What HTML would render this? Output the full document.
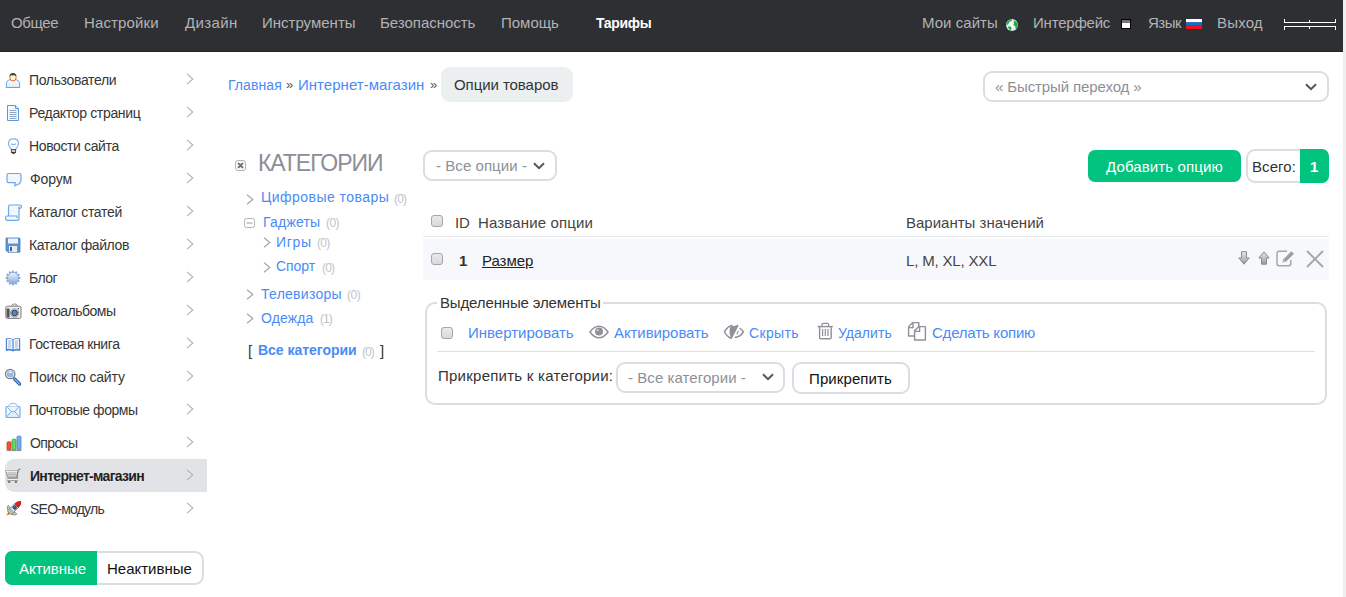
<!DOCTYPE html>
<html><head><meta charset="utf-8">
<style>
html,body{margin:0;padding:0;width:1346px;height:597px;overflow:hidden;background:#fff;font-family:"Liberation Sans",sans-serif;}
.a{position:absolute;white-space:nowrap;line-height:20px;}
.b{position:absolute;box-sizing:border-box;}
svg{position:absolute;overflow:visible;}
#hdr{left:0;top:0;width:1343px;height:52px;background:#2e2f33;border-bottom:1px solid #232428;}
#vbar{left:1343px;top:0;width:3px;height:597px;background:#efefef;}
.cbx{position:absolute;box-sizing:border-box;width:12px;height:12px;border:1px solid #a6a6a6;border-radius:3px;background:linear-gradient(#e9e9e9,#d9d9d9);}
.sel{border:2px solid #dcdde3;border-radius:9px;background:#fff;}
</style></head><body>
<div id="hdr" class="b"></div>
<div id="vbar" class="b"></div>

<!-- header icons -->
<svg style="left:1006px;top:19px" width="12" height="12" viewBox="0 0 12 12">
 <defs><radialGradient id="gl" cx="0.45" cy="0.5" r="0.6"><stop offset="0" stop-color="#ffffff"/><stop offset="0.7" stop-color="#e3ebfb"/><stop offset="1" stop-color="#b9c4de"/></radialGradient></defs>
 <circle cx="6" cy="6" r="6" fill="url(#gl)"/>
 <path d="M0.3 6.8 Q0.2 2.4 4 0.4 L6 0.6 L5.8 1.8 L3.8 2.6 L2.4 4.8 Z" fill="#16b03a"/>
 <path d="M1.8 7.6 L4.6 7.4 L5.6 9.6 L4.4 11.6 Q2.4 10.4 1.8 7.6 Z" fill="#16b03a"/>
 <path d="M7.6 1.6 Q11 2.6 11.8 6 L11 9.6 L9.6 9.4 L9.2 7 L7.4 6.2 L8 4 Z" fill="#16b03a"/>
</svg>
<div class="b" style="left:1121px;top:19px;width:10px;height:10px;border:1px solid #000;background:#fff;"><div class="b" style="left:0;top:0;width:8px;height:3px;background:#777"></div></div>
<svg style="left:1186px;top:19px" width="16" height="10" viewBox="0 0 16 10"><rect x="0" y="0" width="16" height="3.4" fill="#fff"/><rect x="0" y="3.3" width="16" height="3.4" fill="#0c6fd6"/><rect x="0" y="6.6" width="16" height="3.4" fill="#f0101a"/></svg>
<div class="b" style="left:1284px;top:22px;width:52px;height:1px;background:#fff"></div>
<div class="b" style="left:1284px;top:26px;width:52px;height:1px;background:#fff"></div>
<div class="b" style="left:1284px;top:19px;width:1px;height:3px;background:#fff"></div>
<div class="b" style="left:1335px;top:19px;width:1px;height:3px;background:#fff"></div>
<div class="b" style="left:1309px;top:20px;width:1px;height:2px;background:#fff"></div>
<div class="b" style="left:1284px;top:27px;width:1px;height:3px;background:#fff"></div>
<div class="b" style="left:1335px;top:27px;width:1px;height:3px;background:#fff"></div>
<div class="b" style="left:1309px;top:27px;width:1px;height:2px;background:#fff"></div>

<!-- sidebar -->
<div class="b" style="left:5px;top:459px;width:202px;height:33px;background:#e2e3e7;border-radius:9px 0 0 9px;"></div>
<svg style="left:5px;top:72px" width="17" height="17" viewBox="0 0 17 17"><defs><linearGradient id="ub" x1="0" y1="0" x2="0" y2="1"><stop offset="0" stop-color="#ffffff"/><stop offset="1" stop-color="#dce9fa"/></linearGradient></defs>
<path d="M1.2 15.5 L1.6 10.5 Q2 8.3 4.5 7.8 L6 7.3 Q8 10 10 7.3 L11.5 7.8 Q14 8.3 14.4 10.5 L14.8 15.5 Z" fill="url(#ub)" stroke="#6aa0e6" stroke-width="1"/>
<ellipse cx="8" cy="5.4" rx="3.2" ry="3.6" fill="#fff6df" stroke="#e2672a" stroke-width="1"/>
<path d="M4.6 4.6 Q4.6 0.9 8 0.9 Q11.4 0.9 11.4 4.6 Q10 2.6 8 3.6 Q6 2.6 4.6 4.6 Z" fill="#3f4b1c"/></svg>
<svg style="left:186px;top:72.5px" width="8" height="12" viewBox="0 0 8 12"><path d="M1 0.8 L6.8 6.0 L1 11.2" stroke="#b0b2b8" stroke-width="1.1" fill="none"/></svg>
<svg style="left:5px;top:105px" width="17" height="17" viewBox="0 0 17 17"><path d="M2.5 0.5 H10.5 L13.5 3.5 V15.5 H2.5 Z" fill="#f4f9ff" stroke="#5a98e2" stroke-width="1"/>
<path d="M10.5 0.5 V3.5 H13.5" fill="#dbe9fb" stroke="#5a98e2" stroke-width="1"/>
<g stroke="#8fa6c2" stroke-width="1"><path d="M4.5 5.5 H11.5 M4.5 7.5 H11.5 M4.5 9.5 H11.5 M4.5 11.5 H11.5 M4.5 13.5 H11.5"/></g></svg>
<svg style="left:186px;top:105.5px" width="8" height="12" viewBox="0 0 8 12"><path d="M1 0.8 L6.8 6.0 L1 11.2" stroke="#b0b2b8" stroke-width="1.1" fill="none"/></svg>
<svg style="left:5px;top:138px" width="17" height="17" viewBox="0 0 17 17"><path d="M8.5 0.8 Q13.5 0.8 13.5 5.6 Q13.5 8 11.4 10.2 L10.6 11.6 H6.4 L5.6 10.2 Q3.5 8 3.5 5.6 Q3.5 0.8 8.5 0.8 Z" fill="#fff" stroke="#7db2f0" stroke-width="1.2"/>
<path d="M6 5.8 Q8.5 7.6 11 5.8" stroke="#7db2f0" stroke-width="1.1" fill="none"/>
<rect x="6.4" y="11.6" width="4.2" height="3" fill="#cfcfcf" stroke="#444" stroke-width="0.9"/>
<rect x="7.2" y="14.4" width="2.6" height="1.4" fill="#222"/></svg>
<svg style="left:186px;top:138.5px" width="8" height="12" viewBox="0 0 8 12"><path d="M1 0.8 L6.8 6.0 L1 11.2" stroke="#b0b2b8" stroke-width="1.1" fill="none"/></svg>
<svg style="left:5px;top:171px" width="17" height="17" viewBox="0 0 17 17"><path d="M3.5 2.5 H14.5 Q16 2.5 16 4 V9 Q16 12.5 12 13.8 L9.8 14.8 L10.2 11.6 H3.5 Q2 11.6 2 10 V4 Q2 2.5 3.5 2.5 Z" fill="#f2f7fe" stroke="#6ea6ea" stroke-width="1.2"/></svg>
<svg style="left:186px;top:171.5px" width="8" height="12" viewBox="0 0 8 12"><path d="M1 0.8 L6.8 6.0 L1 11.2" stroke="#b0b2b8" stroke-width="1.1" fill="none"/></svg>
<svg style="left:5px;top:204px" width="17" height="17" viewBox="0 0 17 17"><path d="M3.5 12 V2.6 Q3.5 1 5 1 H15 Q16.5 1 16.5 2.6 Q16.5 4.4 15 4.4 H14 V15 Q14 16.4 12.6 16.4 H2 Q0.6 16.4 0.6 14.6 V13.4 Q0.6 12 2 12 H12 V14" fill="#f2f7fe" stroke="#6ea6ea" stroke-width="1.2"/>
<path d="M14 2.8 V4.4" stroke="#4d7fbf" stroke-width="1"/></svg>
<svg style="left:186px;top:204.5px" width="8" height="12" viewBox="0 0 8 12"><path d="M1 0.8 L6.8 6.0 L1 11.2" stroke="#b0b2b8" stroke-width="1.1" fill="none"/></svg>
<svg style="left:5px;top:237px" width="17" height="17" viewBox="0 0 17 17"><path d="M1.5 1 H14 Q15 1 15 2 V14.5 Q15 15.3 14 15.3 H3 L1 13.3 V1.8 Q1 1 1.5 1 Z" fill="#5f93d3" stroke="#4479bd" stroke-width="0.8"/>
<rect x="3" y="1.5" width="10" height="5" fill="#eef5ff"/>
<rect x="4" y="9" width="8" height="6.2" fill="#ecebe8"/>
<rect x="5" y="9.8" width="2" height="4.4" fill="#2f66b3"/></svg>
<svg style="left:186px;top:237.5px" width="8" height="12" viewBox="0 0 8 12"><path d="M1 0.8 L6.8 6.0 L1 11.2" stroke="#b0b2b8" stroke-width="1.1" fill="none"/></svg>
<svg style="left:5px;top:270px" width="17" height="17" viewBox="0 0 17 17"><defs><linearGradient id="gg" x1="0" y1="0" x2="0" y2="1"><stop offset="0" stop-color="#f2f6fc"/><stop offset="1" stop-color="#88aad8"/></linearGradient></defs>
<rect x="7" y="0.6" width="2" height="2.8" fill="#8aaedc" transform="rotate(0 8 8)"/><rect x="7" y="0.6" width="2" height="2.8" fill="#8aaedc" transform="rotate(30 8 8)"/><rect x="7" y="0.6" width="2" height="2.8" fill="#8aaedc" transform="rotate(60 8 8)"/><rect x="7" y="0.6" width="2" height="2.8" fill="#8aaedc" transform="rotate(90 8 8)"/><rect x="7" y="0.6" width="2" height="2.8" fill="#8aaedc" transform="rotate(120 8 8)"/><rect x="7" y="0.6" width="2" height="2.8" fill="#8aaedc" transform="rotate(150 8 8)"/><rect x="7" y="0.6" width="2" height="2.8" fill="#8aaedc" transform="rotate(180 8 8)"/><rect x="7" y="0.6" width="2" height="2.8" fill="#8aaedc" transform="rotate(210 8 8)"/><rect x="7" y="0.6" width="2" height="2.8" fill="#8aaedc" transform="rotate(240 8 8)"/><rect x="7" y="0.6" width="2" height="2.8" fill="#8aaedc" transform="rotate(270 8 8)"/><rect x="7" y="0.6" width="2" height="2.8" fill="#8aaedc" transform="rotate(300 8 8)"/><rect x="7" y="0.6" width="2" height="2.8" fill="#8aaedc" transform="rotate(330 8 8)"/>
<circle cx="8" cy="8" r="5.6" fill="url(#gg)" stroke="#86a9d8" stroke-width="0.9"/></svg>
<svg style="left:186px;top:270.5px" width="8" height="12" viewBox="0 0 8 12"><path d="M1 0.8 L6.8 6.0 L1 11.2" stroke="#b0b2b8" stroke-width="1.1" fill="none"/></svg>
<svg style="left:5px;top:303px" width="17" height="17" viewBox="0 0 17 17"><path d="M6.5 3 Q7 1 9 1 H10 Q12 1 12.5 3" fill="#eee" stroke="#888" stroke-width="0.9"/>
<rect x="0.8" y="3.2" width="15.2" height="12.2" rx="1.6" fill="#f0f0f0" stroke="#7a7a7a" stroke-width="1"/>
<rect x="1.6" y="5.5" width="3" height="9" fill="#555"/>
<circle cx="9.6" cy="10" r="4.2" fill="#ddd" stroke="#888" stroke-width="0.8"/>
<circle cx="9.6" cy="10" r="2.8" fill="#4b8ad6" stroke="#222" stroke-width="0.8"/>
<circle cx="13.4" cy="5.6" r="0.7" fill="#333"/></svg>
<svg style="left:186px;top:303.5px" width="8" height="12" viewBox="0 0 8 12"><path d="M1 0.8 L6.8 6.0 L1 11.2" stroke="#b0b2b8" stroke-width="1.1" fill="none"/></svg>
<svg style="left:5px;top:336px" width="17" height="17" viewBox="0 0 17 17"><path d="M0.8 2.5 Q4.5 1.3 8 3.2 Q11.5 1.3 15.2 2.5 V15.2 Q11.5 13.6 8 15.6 Q4.5 13.6 0.8 15.2 Z" fill="#4d86cf"/>
<path d="M2 3.2 Q5 2.2 7.4 3.8 V13.6 Q5 12.4 2 13 Z M8.6 3.8 Q11 2.2 14 3.2 V13 Q11 12.4 8.6 13.6 Z" fill="#f1f7ff"/>
<g stroke="#94a6bd" stroke-width="0.9"><path d="M3.2 5 H6 M3.2 7 H6 M3.2 9 H6 M3.2 11 H6 M10 5 H12.8 M10 7 H12.8 M10 9 H12.8 M10 11 H12.8"/></g></svg>
<svg style="left:186px;top:336.5px" width="8" height="12" viewBox="0 0 8 12"><path d="M1 0.8 L6.8 6.0 L1 11.2" stroke="#b0b2b8" stroke-width="1.1" fill="none"/></svg>
<svg style="left:5px;top:369px" width="17" height="17" viewBox="0 0 17 17"><path d="M9.6 10 L14.6 15" stroke="#2a5aa0" stroke-width="3.2" stroke-linecap="round"/>
<path d="M9.6 10 L14.6 15" stroke="#7fb2f0" stroke-width="1.4" stroke-linecap="round"/>
<circle cx="5.2" cy="5" r="4.7" fill="#fff" stroke="#7a7a7a" stroke-width="1.2"/>
<circle cx="5.2" cy="5" r="3.4" fill="#8ab9f6"/>
<ellipse cx="5.2" cy="3.2" rx="1.8" ry="0.7" fill="#fff"/></svg>
<svg style="left:186px;top:369.5px" width="8" height="12" viewBox="0 0 8 12"><path d="M1 0.8 L6.8 6.0 L1 11.2" stroke="#b0b2b8" stroke-width="1.1" fill="none"/></svg>
<svg style="left:5px;top:402px" width="17" height="17" viewBox="0 0 17 17"><path d="M1 5.5 Q1 4.5 2.2 4.5 H13.8 Q15 4.5 15 5.5 V14.8 Q15 15.5 14 15.5 H2 Q1 15.5 1 14.8 Z" fill="#f1f7ff" stroke="#6ea6ea" stroke-width="1.1"/>
<path d="M3 4.5 Q5 1 8 1.2 Q11 1 13 4.5" fill="#fff" stroke="#8cbaf0" stroke-width="1"/>
<path d="M1.5 15 L6.2 9.6 H9.8 L14.5 15 M2.8 5.5 L6.2 9.6 M13.2 5.5 L9.8 9.6" fill="#e3eefc" stroke="#6ea6ea" stroke-width="0.9"/></svg>
<svg style="left:186px;top:402.5px" width="8" height="12" viewBox="0 0 8 12"><path d="M1 0.8 L6.8 6.0 L1 11.2" stroke="#b0b2b8" stroke-width="1.1" fill="none"/></svg>
<svg style="left:5px;top:435px" width="17" height="17" viewBox="0 0 17 17"><rect x="2" y="6.8" width="4" height="8.2" rx="1" fill="#f4532e" stroke="#d62b0c" stroke-width="0.7"/>
<rect x="7" y="4.2" width="4" height="10.8" rx="1" fill="#66d66a" stroke="#1e9c25" stroke-width="0.7"/>
<rect x="12" y="1.2" width="4" height="13.8" rx="1" fill="#76aeeb" stroke="#3b73c0" stroke-width="0.7"/>
<path d="M1.5 15.6 H16.5" stroke="#777" stroke-width="0.8"/></svg>
<svg style="left:186px;top:435.5px" width="8" height="12" viewBox="0 0 8 12"><path d="M1 0.8 L6.8 6.0 L1 11.2" stroke="#b0b2b8" stroke-width="1.1" fill="none"/></svg>
<svg style="left:5px;top:468px" width="17" height="17" viewBox="0 0 17 17"><path d="M0.6 2.6 H13 L12 9.4 H2.8 Z" fill="#ececec" stroke="#8c8c8c" stroke-width="0.9"/>
<path d="M0.8 3.2 H12.8" stroke="#fff" stroke-width="1"/>
<g stroke="#a8a8a8" stroke-width="0.6"><path d="M1.8 5 H12.6 M2.3 6.6 H12.4 M2.7 8.2 H12.2 M3.8 3.6 L4.4 9.4 M5.9 3.6 L6.2 9.4 M8 3.6 L8 9.4 M10.1 3.6 L9.9 9.4"/></g>
<path d="M12 9.6 L13 2.4 Q13.4 1.2 15.6 1" stroke="#7d7d7d" stroke-width="1.1" fill="none"/>
<rect x="2.4" y="10.6" width="10.2" height="1.9" fill="#f2f2f2" stroke="#8c8c8c" stroke-width="0.8"/>
<ellipse cx="4.2" cy="13.9" rx="1.3" ry="1" fill="#6e6e6e"/><ellipse cx="10.9" cy="13.9" rx="1.3" ry="1" fill="#6e6e6e"/></svg>
<svg style="left:186px;top:468.5px" width="8" height="12" viewBox="0 0 8 12"><path d="M1 0.8 L6.8 6.0 L1 11.2" stroke="#b0b2b8" stroke-width="1.1" fill="none"/></svg>
<svg style="left:5px;top:501px" width="17" height="17" viewBox="0 0 17 17"><g transform="translate(8.6 7.6) rotate(-45)">
<path d="M-5.5 -2.4 L-3.2 -6 L-1.4 -6 L-1.8 -2.4 Z M-5.5 2.4 L-3.2 6 L-1.4 6 L-1.8 2.4 Z" fill="#c3ccbf" stroke="#777" stroke-width="0.7"/>
<path d="M-6 -1.8 L-10.6 0 L-6 1.8 Z" fill="#f7b52e"/>
<path d="M-6 -1 L-9 0 L-6 1 Z" fill="#f0452a"/>
<rect x="-6" y="-2.6" width="10.4" height="5.2" fill="#eef0f6" stroke="#6a6a6a" stroke-width="0.8"/>
<rect x="-5.4" y="-2.1" width="3.8" height="4.2" fill="#a7c4a2"/>
<path d="M4.2 -2.6 Q8.6 -2.6 10.2 0 Q8.6 2.6 4.2 2.6 Z" fill="#dc2222" stroke="#9a1515" stroke-width="0.6"/>
<circle cx="1.6" cy="0" r="1.8" fill="#3f60b0" stroke="#1d1d1d" stroke-width="0.6"/>
</g></svg>
<svg style="left:186px;top:501.5px" width="8" height="12" viewBox="0 0 8 12"><path d="M1 0.8 L6.8 6.0 L1 11.2" stroke="#b0b2b8" stroke-width="1.1" fill="none"/></svg>

<div class="b" style="left:5px;top:551px;width:199px;height:34px;border:2px solid #dcdde3;border-radius:9px;background:#fff;"></div>
<div class="b" style="left:5px;top:551px;width:92px;height:34px;background:#02c37d;border-radius:7px 0 0 7px;"></div>

<!-- breadcrumbs -->
<div class="b" style="left:441px;top:67px;width:132px;height:35px;background:#ebeff0;border-radius:9px;"></div>
<div class="b sel" style="left:983px;top:71px;width:346px;height:31px;"></div>
<svg style="left:1305px;top:83px" width="12" height="8" viewBox="0 0 12 8"><path d="M1 1.2 L6 6.2 L11 1.2" stroke="#555" stroke-width="2" fill="none"/></svg>

<!-- categories -->
<svg style="left:235px;top:160px" width="11" height="11" viewBox="0 0 11 11">
 <rect x="0.5" y="0.5" width="10" height="10" rx="2.5" fill="#fafafa" stroke="#b4b4b4"/>
 <path d="M3.6 3.6 L7.4 7.4 M7.4 3.6 L3.6 7.4" stroke="#6e6e6e" stroke-width="2" stroke-linecap="round"/>
</svg>
<svg style="left:246px;top:194px" width="8" height="11" viewBox="0 0 8 11"><path d="M1 0.8 L6.8 5.5 L1 10.2" stroke="#a3a5aa" stroke-width="1.2" fill="none"/></svg>
<svg style="left:263px;top:237px" width="8" height="11" viewBox="0 0 8 11"><path d="M1 0.8 L6.8 5.5 L1 10.2" stroke="#a3a5aa" stroke-width="1.2" fill="none"/></svg>
<svg style="left:263px;top:262px" width="8" height="11" viewBox="0 0 8 11"><path d="M1 0.8 L6.8 5.5 L1 10.2" stroke="#a3a5aa" stroke-width="1.2" fill="none"/></svg>
<svg style="left:246px;top:289px" width="8" height="11" viewBox="0 0 8 11"><path d="M1 0.8 L6.8 5.5 L1 10.2" stroke="#a3a5aa" stroke-width="1.2" fill="none"/></svg>
<svg style="left:246px;top:313px" width="8" height="11" viewBox="0 0 8 11"><path d="M1 0.8 L6.8 5.5 L1 10.2" stroke="#a3a5aa" stroke-width="1.2" fill="none"/></svg>
<svg style="left:244px;top:218px" width="11" height="10" viewBox="0 0 11 10"><rect x="0.5" y="0.5" width="10" height="9" rx="2" fill="none" stroke="#b4b4b4"/><path d="M2.5 5 H8.5" stroke="#9a9a9a" stroke-width="1"/></svg>

<!-- options toolbar -->
<div class="b sel" style="left:423px;top:150px;width:134px;height:31px;"></div>
<svg style="left:533px;top:162px" width="12" height="8" viewBox="0 0 12 8"><path d="M1 1.2 L6 6.2 L11 1.2" stroke="#555" stroke-width="2" fill="none"/></svg>
<div class="b" style="left:1088px;top:150px;width:153px;height:32px;background:#02c37d;border-radius:7px;"></div>
<div class="b" style="left:1246px;top:149px;width:83px;height:34px;border:2px solid #dcdde3;border-radius:9px;background:#fff;"></div>
<div class="b" style="left:1300px;top:149px;width:29px;height:34px;background:#02c37d;border-radius:0 7px 7px 0;"></div>

<!-- table -->
<div class="cbx" style="left:431px;top:215px;"></div>
<div class="b" style="left:423px;top:236px;width:906px;height:1px;background:#e4e7eb;"></div>
<div class="b" style="left:423px;top:239px;width:906px;height:41px;background:#f7f8fb;"></div>
<div class="cbx" style="left:431px;top:253px;"></div>

<svg style="left:1238px;top:251px" width="12" height="14" viewBox="0 0 12 14">
 <defs><linearGradient id="ag" x1="0" y1="0" x2="0" y2="1"><stop offset="0" stop-color="#e8e8e8"/><stop offset="1" stop-color="#9a9a9a"/></linearGradient></defs>
 <path d="M3.5 0.7 H8.5 V7 H11.2 L6 13.2 L0.8 7 H3.5 Z" fill="url(#ag)" stroke="#8a8a8a" stroke-width="1" stroke-linejoin="round"/>
</svg>
<svg style="left:1258px;top:251px" width="12" height="14" viewBox="0 0 12 14">
 <defs><linearGradient id="ag2" x1="0" y1="0" x2="0" y2="1"><stop offset="0" stop-color="#e8e8e8"/><stop offset="1" stop-color="#9a9a9a"/></linearGradient></defs>
 <path d="M6 0.8 L11.2 7 H8.5 V13.2 H3.5 V7 H0.8 Z" fill="url(#ag2)" stroke="#8a8a8a" stroke-width="1" stroke-linejoin="round"/>
</svg>
<svg style="left:1276px;top:250px" width="20" height="17" viewBox="0 0 20 17">
 <path d="M11 1.2 H3.2 Q1 1.2 1 3.4 V13.6 Q1 15.8 3.2 15.8 H12.6 Q14.8 15.8 14.8 13.6 V10" fill="none" stroke="#a4a6ab" stroke-width="1.5"/>
 <path d="M6.4 12.4 L7.4 9.2 L15.4 1.2 L18 3.8 L10 11.8 Z" fill="#9c9ea3"/>
 <path d="M7.6 11.4 L8 10 L9.2 11.2 Z" fill="#fff"/>
</svg>
<svg style="left:1306px;top:250px" width="18" height="18" viewBox="0 0 18 18">
 <path d="M1 1 L17 17 M17 1 L1 17" stroke="#a5a8ad" stroke-width="2"/>
</svg>


<!-- fieldset -->
<div class="b" style="left:425px;top:302px;width:902px;height:103px;border:2px solid #dcdde3;border-radius:10px;"></div>
<div class="b" style="left:437px;top:296px;width:166px;height:12px;background:#fff;"></div>
<div class="cbx" style="left:441px;top:327px;"></div>
<div class="b" style="left:437px;top:351px;width:878px;height:1px;background:#dfe1e5;"></div>

<svg style="left:589px;top:325px" width="20" height="14" viewBox="0 0 20 14">
 <path d="M1 7 Q5 1.2 10 1.2 Q15 1.2 19 7 Q15 12.8 10 12.8 Q5 12.8 1 7 Z" fill="#fff" stroke="#8f9196" stroke-width="1.5"/>
 <circle cx="10" cy="6.6" r="4" fill="#8f9196"/>
 <circle cx="8.6" cy="5.2" r="1.1" fill="#d0d0d0"/>
</svg>
<svg style="left:720px;top:320px" width="26" height="22" viewBox="0 0 26 22">
 <path d="M12.6 5.6 Q7.5 6 4.4 12 Q7 16.6 10.4 18.2" fill="none" stroke="#8f9196" stroke-width="1.5"/>
 <path d="M10.6 6.4 Q16 5.4 16.6 6 L11 17.6 Q9 14 9.6 10.4 Q9.8 7.6 10.6 6.4 Z" fill="#8f9196"/>
 <path d="M17.8 5 L10.6 18.8" stroke="#8f9196" stroke-width="2"/>
 <path d="M19.6 8 Q22 9.6 23.4 12 Q20 17 14.6 17.6" fill="none" stroke="#8f9196" stroke-width="1.5"/>
 <path d="M18.4 10.6 L16.8 14.4" stroke="#8f9196" stroke-width="1.1"/>
</svg>
<svg style="left:814px;top:320px" width="20" height="21" viewBox="0 0 20 21">
 <path d="M8 6 V4.6 Q8 3.4 9.2 3.4 H13.4 Q14.6 3.4 14.6 4.6 V6" fill="none" stroke="#8f9196" stroke-width="1.3"/>
 <path d="M3.6 6.6 H18.8" stroke="#8f9196" stroke-width="1.4"/>
 <path d="M5.6 6.8 V17.4 Q5.6 18.8 7 18.8 H15.8 Q17.2 18.8 17.2 17.4 V6.8" fill="none" stroke="#8f9196" stroke-width="1.4"/>
 <path d="M8.6 9 V15.9 M11.3 9 V15.9 M14 9 V15.9" stroke="#8f9196" stroke-width="1.2"/>
</svg>
<svg style="left:904px;top:319px" width="26" height="25" viewBox="0 0 26 25">
 <path d="M8.8 3.6 H14.8 V8.6 L10.6 12.6 V17 H4.6 V7.8 Z" fill="#fff" stroke="#8f9196" stroke-width="1.4" stroke-linejoin="round"/>
 <path d="M9 3.8 V8.6 H4.8" fill="none" stroke="#8f9196" stroke-width="1.4"/>
 <path d="M14.8 7.6 H21.4 V21 H10.6 V11.8 Z" fill="#fff" stroke="#8f9196" stroke-width="1.4" stroke-linejoin="round"/>
 <path d="M15.6 7.8 V12.4 H10.8" fill="none" stroke="#8f9196" stroke-width="1.4"/>
</svg>

<div class="b sel" style="left:616px;top:362px;width:169px;height:31px;"></div>
<svg style="left:762px;top:373px" width="12" height="8" viewBox="0 0 12 8"><path d="M1 1.2 L6 6.2 L11 1.2" stroke="#555" stroke-width="2" fill="none"/></svg>
<div class="b sel" style="left:792px;top:362px;width:118px;height:32px;"></div>

<div class="a" id="t0" style="left:11.0px;top:13.0px;font-size:15px;color:#b3b3b3;letter-spacing:-0.39px;">Общее</div>
<div class="a" id="t1" style="left:84.0px;top:13.0px;font-size:15px;color:#b3b3b3;letter-spacing:0.12px;">Настройки</div>
<div class="a" id="t2" style="left:185.0px;top:13.0px;font-size:15px;color:#b3b3b3;letter-spacing:0.37px;">Дизайн</div>
<div class="a" id="t3" style="left:262.0px;top:13.0px;font-size:15px;color:#b3b3b3;">Инструменты</div>
<div class="a" id="t4" style="left:380.0px;top:13.0px;font-size:15px;color:#b3b3b3;letter-spacing:-0.03px;">Безопасность</div>
<div class="a" id="t5" style="left:501.0px;top:13.0px;font-size:15px;color:#b3b3b3;">Помощь</div>
<div class="a" id="t6" style="left:922.0px;top:13.0px;font-size:15px;color:#b3b3b3;letter-spacing:0.04px;">Мои сайты</div>
<div class="a" id="t7" style="left:1033.0px;top:13.0px;font-size:15px;color:#b3b3b3;letter-spacing:-0.21px;">Интерфейс</div>
<div class="a" id="t8" style="left:1148.0px;top:13.0px;font-size:15px;color:#b3b3b3;letter-spacing:-0.46px;">Язык</div>
<div class="a" id="t9" style="left:1217.0px;top:13.0px;font-size:15px;color:#b3b3b3;letter-spacing:0.17px;">Выход</div>
<div class="a" id="t10" style="left:596.0px;top:13.0px;font-size:14px;color:#ffffff;font-weight:bold;letter-spacing:-0.34px;">Тарифы</div>
<div class="a" id="t11" style="left:29.0px;top:70.0px;font-size:14px;color:#363636;letter-spacing:-0.35px;">Пользователи</div>
<div class="a" id="t12" style="left:29.0px;top:103.0px;font-size:14px;color:#363636;letter-spacing:-0.33px;">Редактор страниц</div>
<div class="a" id="t13" style="left:29.0px;top:136.0px;font-size:14px;color:#363636;letter-spacing:-0.38px;">Новости сайта</div>
<div class="a" id="t14" style="left:30.0px;top:169.0px;font-size:14px;color:#363636;letter-spacing:-0.10px;">Форум</div>
<div class="a" id="t15" style="left:29.0px;top:202.0px;font-size:14px;color:#363636;letter-spacing:-0.32px;">Каталог статей</div>
<div class="a" id="t16" style="left:29.0px;top:235.0px;font-size:14px;color:#363636;letter-spacing:-0.39px;">Каталог файлов</div>
<div class="a" id="t17" style="left:29.0px;top:268.0px;font-size:14px;color:#363636;letter-spacing:-0.51px;">Блог</div>
<div class="a" id="t18" style="left:30.0px;top:301.0px;font-size:14px;color:#363636;letter-spacing:-0.49px;">Фотоальбомы</div>
<div class="a" id="t19" style="left:29.0px;top:334.0px;font-size:14px;color:#363636;letter-spacing:-0.41px;">Гостевая книга</div>
<div class="a" id="t20" style="left:29.0px;top:367.0px;font-size:14px;color:#363636;letter-spacing:-0.17px;">Поиск по сайту</div>
<div class="a" id="t21" style="left:29.0px;top:400.0px;font-size:14px;color:#363636;letter-spacing:-0.44px;">Почтовые формы</div>
<div class="a" id="t22" style="left:30.0px;top:433.0px;font-size:14px;color:#363636;letter-spacing:-0.61px;">Опросы</div>
<div class="a" id="t23" style="left:30.0px;top:466.0px;font-size:14px;color:#222;font-weight:bold;letter-spacing:-0.69px;">Интернет-магазин</div>
<div class="a" id="t24" style="left:30.0px;top:499.0px;font-size:14px;color:#363636;letter-spacing:-0.77px;">SEO-модуль</div>
<div class="a" id="t25" style="left:19.0px;top:559.0px;font-size:15px;color:#ffffff;letter-spacing:-0.03px;">Активные</div>
<div class="a" id="t26" style="left:107.0px;top:559.0px;font-size:15px;color:#111111;letter-spacing:-0.01px;">Неактивные</div>
<div class="a" id="t27" style="left:228.0px;top:75.0px;font-size:14px;color:#4a8bf6;letter-spacing:0.07px;">Главная</div>
<div class="a" id="t28" style="left:286.0px;top:75.0px;font-size:13px;color:#555;">»</div>
<div class="a" id="t29" style="left:298.0px;top:75.0px;font-size:15px;color:#4a8bf6;letter-spacing:0.03px;">Интернет-магазин</div>
<div class="a" id="t30" style="left:430.0px;top:75.0px;font-size:13px;color:#555;">»</div>
<div class="a" id="t31" style="left:454.0px;top:75.0px;font-size:15px;color:#333;letter-spacing:-0.06px;">Опции товаров</div>
<div class="a" id="t32" style="left:995.0px;top:77.0px;font-size:15px;color:#8d9097;letter-spacing:-0.11px;">« Быстрый переход »</div>
<div class="a" id="t33" style="left:258.0px;top:153.0px;font-size:23px;color:#8b8e95;letter-spacing:-1.04px;">КАТЕГОРИИ</div>
<div class="a" id="t34" style="left:261.0px;top:187.0px;font-size:14px;color:#4a8bf6;letter-spacing:0.46px;">Цифровые товары</div>
<div class="a" id="t35" style="left:394.0px;top:189.0px;font-size:12px;color:#bfc3ca;letter-spacing:-0.83px;">(0)</div>
<div class="a" id="t36" style="left:263.0px;top:212.0px;font-size:14px;color:#4a8bf6;letter-spacing:0.21px;">Гаджеты</div>
<div class="a" id="t37" style="left:326.0px;top:213.0px;font-size:12px;color:#bfc3ca;letter-spacing:-0.58px;">(0)</div>
<div class="a" id="t38" style="left:276.0px;top:232.0px;font-size:14px;color:#4a8bf6;letter-spacing:0.68px;">Игры</div>
<div class="a" id="t39" style="left:317.0px;top:233.0px;font-size:12px;color:#bfc3ca;letter-spacing:-0.73px;">(0)</div>
<div class="a" id="t40" style="left:276.0px;top:256.0px;font-size:14px;color:#4a8bf6;letter-spacing:-0.04px;">Спорт</div>
<div class="a" id="t41" style="left:322.0px;top:258.0px;font-size:12px;color:#bfc3ca;letter-spacing:-0.78px;">(0)</div>
<div class="a" id="t42" style="left:261.0px;top:284.0px;font-size:14px;color:#4a8bf6;letter-spacing:0.27px;">Телевизоры</div>
<div class="a" id="t43" style="left:347.0px;top:285.0px;font-size:12px;color:#bfc3ca;letter-spacing:-0.48px;">(0)</div>
<div class="a" id="t44" style="left:261.0px;top:308.0px;font-size:14px;color:#4a8bf6;letter-spacing:0.14px;">Одежда</div>
<div class="a" id="t45" style="left:320.0px;top:309.0px;font-size:12px;color:#bfc3ca;letter-spacing:-0.93px;">(1)</div>
<div class="a" id="t46" style="left:248.0px;top:341.0px;font-size:15px;color:#333;">[</div>
<div class="a" id="t47" style="left:258.0px;top:340.0px;font-size:14px;color:#4a8bf6;font-weight:bold;letter-spacing:-0.03px;">Все категории</div>
<div class="a" id="t48" style="left:362.0px;top:342.0px;font-size:12px;color:#bfc3ca;letter-spacing:-0.93px;">(0)</div>
<div class="a" id="t49" style="left:380.0px;top:341.0px;font-size:15px;color:#333;">]</div>
<div class="a" id="t50" style="left:436.0px;top:156.0px;font-size:15px;color:#8d9097;letter-spacing:0.06px;">- Все опции -</div>
<div class="a" id="t51" style="left:1106.0px;top:157.0px;font-size:15px;color:#ffffff;letter-spacing:0.12px;">Добавить опцию</div>
<div class="a" id="t52" style="left:1252.0px;top:157.0px;font-size:15px;color:#333;letter-spacing:0.07px;">Всего:</div>
<div class="a" id="t53" style="left:1310.0px;top:157.0px;font-size:15px;color:#ffffff;font-weight:bold;">1</div>
<div class="a" id="t54" style="left:455.0px;top:213.0px;font-size:15px;color:#444;letter-spacing:-0.07px;">ID</div>
<div class="a" id="t55" style="left:478.0px;top:213.0px;font-size:15px;color:#444;letter-spacing:0.15px;">Название опции</div>
<div class="a" id="t56" style="left:906.0px;top:213.0px;font-size:15px;color:#444;">Варианты значений</div>
<div class="a" id="t57" style="left:459.0px;top:251.0px;font-size:15px;color:#333;font-weight:bold;">1</div>
<div class="a" id="t58" style="left:482.0px;top:251.0px;font-size:15px;color:#222;letter-spacing:-0.04px;text-decoration:underline;">Размер</div>
<div class="a" id="t59" style="left:906.0px;top:251.0px;font-size:15px;color:#444;letter-spacing:-0.17px;">L, M, XL, XXL</div>
<div class="a" id="t60" style="left:440.0px;top:293.0px;font-size:15px;color:#333;letter-spacing:-0.14px;">Выделенные элементы</div>
<div class="a" id="t61" style="left:468.0px;top:323.0px;font-size:15px;color:#4a8bf6;">Инвертировать</div>
<div class="a" id="t62" style="left:614.0px;top:323.0px;font-size:15px;color:#4a8bf6;letter-spacing:-0.08px;">Активировать</div>
<div class="a" id="t63" style="left:749.0px;top:323.0px;font-size:14px;color:#4a8bf6;letter-spacing:0.34px;">Скрыть</div>
<div class="a" id="t64" style="left:838.0px;top:323.0px;font-size:14px;color:#4a8bf6;letter-spacing:0.04px;">Удалить</div>
<div class="a" id="t65" style="left:932.0px;top:323.0px;font-size:15px;color:#4a8bf6;letter-spacing:-0.21px;">Сделать копию</div>
<div class="a" id="t66" style="left:438.0px;top:366.0px;font-size:15px;color:#333;letter-spacing:0.25px;">Прикрепить к категории:</div>
<div class="a" id="t67" style="left:628.0px;top:368.0px;font-size:15px;color:#8d9097;letter-spacing:0.06px;">- Все категории -</div>
<div class="a" id="t68" style="left:809.0px;top:369.0px;font-size:15px;color:#111;letter-spacing:0.10px;">Прикрепить</div>
</body></html>
